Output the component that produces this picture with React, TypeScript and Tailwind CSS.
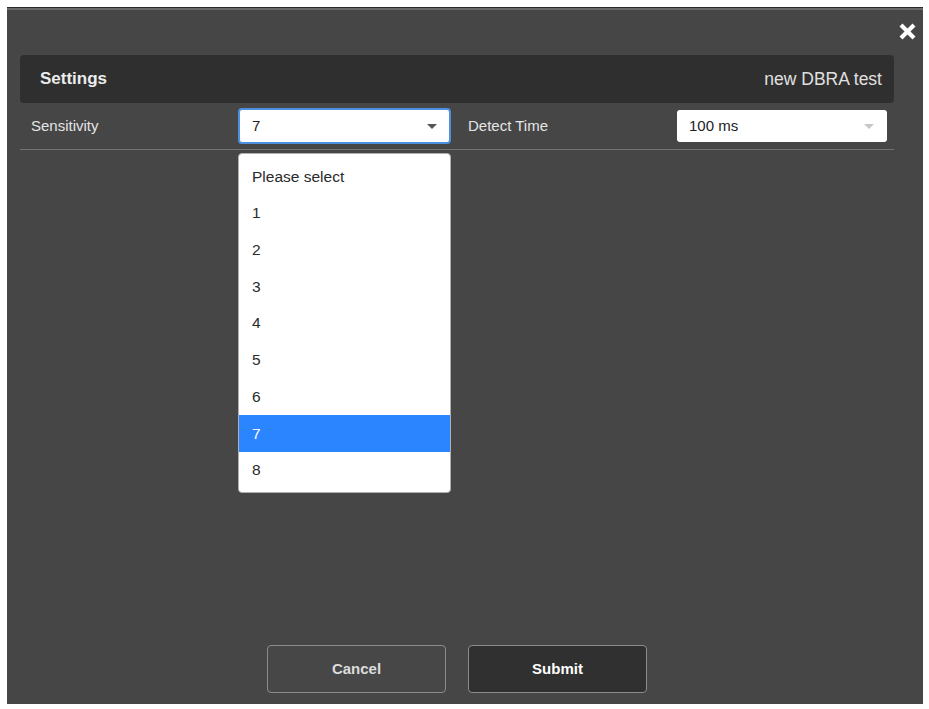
import { useState } from "react";

const options = ["Please select", "1", "2", "3", "4", "5", "6", "7", "8"];

function Caret({ className }: { className: string }) {
  return (
    <svg width="10" height="5" viewBox="0 0 10 5" className={className}>
      <path d="M0 0 L10 0 L5 5 Z" fill="currentColor" />
    </svg>
  );
}

export default function App() {
  const [selected] = useState("7");

  return (
    <div className="w-[929px] h-[709px] bg-white pt-[7px] pl-[7px] font-['Liberation_Sans',Arial,sans-serif]">
      <div className="w-[916px] h-[697px] bg-[#464646] border-t border-[#2a2a2a] flex flex-col">
        <div className="h-[2px] bg-[#6a6a6a]" />

        {/* Top bar with close */}
        <div className="h-[45px] flex items-start justify-end pr-[6px] pt-[11px]">
          <button className="w-[20px] h-[20px] flex items-center justify-center">
            <svg width="19" height="19" viewBox="0 0 19 19">
              <path d="M3 3 L16 16 M16 3 L3 16" stroke="#ffffff" strokeWidth="4.2" strokeLinecap="butt" />
            </svg>
          </button>
        </div>

        <div className="ml-[13px] w-[874px] flex-1 flex flex-col">
          {/* Header */}
          <div className="h-[48px] bg-[#2f2f2f] rounded-[4px] flex items-center justify-between pl-[20px] pr-[12px]">
            <span className="text-[17px] font-bold text-[#ececec]">Settings</span>
            <span className="text-[17.5px] text-[#e0e0e0]">new DBRA test</span>
          </div>

          {/* Settings row */}
          <div className="h-[47px] flex items-center border-b border-[#727272]">
            <div className="w-[218px] pl-[11px] text-[15px] text-[#e4e4e4]">Sensitivity</div>
            <div className="relative">
              <div className="w-[213px] h-[36px] bg-white border-2 border-[#4d90e0] rounded-[4px] flex items-center justify-between pl-[12px] pr-[12px]">
                <span className="text-[15px] text-[#222]">{selected}</span>
                <Caret className="text-[#555]" />
              </div>
              <div className="absolute left-0 top-[45px] w-[213px] h-[340px] bg-white rounded-[4px] border border-[#b0b0b0] py-[4px] z-10 overflow-hidden">
                {options.map((o) => (
                  <div
                    key={o}
                    className={`h-[36.7px] flex items-center pl-[13px] text-[15.5px] ${
                      o === selected ? "bg-[#2a85ff] text-white" : "text-[#2a2a2a]"
                    }`}
                  >
                    {o}
                  </div>
                ))}
              </div>
            </div>
            <div className="w-[226px] pl-[17px] text-[15px] text-[#e4e4e4]">Detect Time</div>
            <div className="w-[210px] h-[32px] bg-white rounded-[3px] flex items-center justify-between pl-[12px] pr-[13px]">
              <span className="text-[15px] text-[#222]">100 ms</span>
              <Caret className="text-[#c8c8c8]" />
            </div>
          </div>

          {/* Actions */}
          <div className="mt-auto mb-[11px] flex justify-center gap-[22px]">
            <button className="w-[179px] h-[48px] rounded-[4px] border border-[#8c8c8c] bg-[#474747] text-[15px] font-bold text-[#dcdcdc]">
              Cancel
            </button>
            <button className="w-[179px] h-[48px] rounded-[4px] border border-[#8c8c8c] bg-[#303030] text-[15px] font-bold text-white">
              Submit
            </button>
          </div>
        </div>
      </div>
    </div>
  );
}
